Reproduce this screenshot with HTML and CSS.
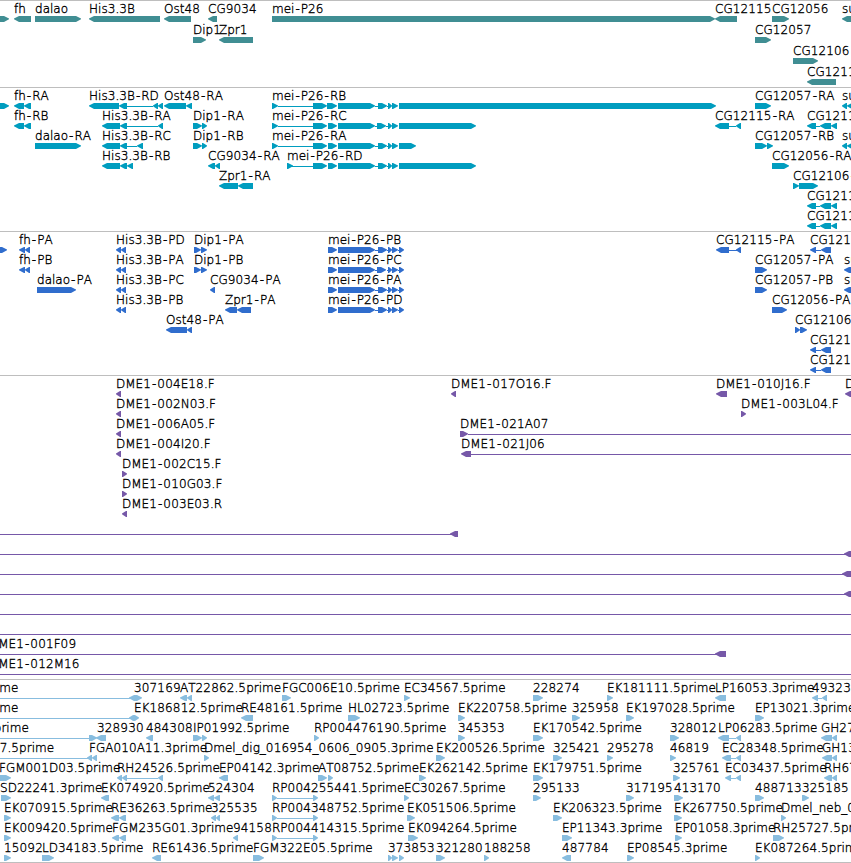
FILE: index.html
```html
<!DOCTYPE html>
<html lang="en">
<head>
    <meta charset="UTF-8">
    <meta name="viewport" content="width=device-width, initial-scale=1.0">
    <title>Genome browser</title>
    <link rel="stylesheet" href="styles.css">
</head>
<body>
    <div id="browser">
        <section class="track gene" id="gene"></section>
        <section class="track transcript" id="transcript"></section>
        <section class="track protein" id="protein"></section>
        <section class="track bac" id="bac"></section>
        <section class="track est" id="est"></section>
    </div>
    <script src="tracks.js"></script>
</body>
</html>
```
FILE: styles.css
```css
body { margin: 0; background-color: #fff; overflow: hidden; }
#browser { width: 851px; overflow: hidden; border-bottom: 1px solid #bebebe; }

.track { box-sizing: border-box; border-top: 1px solid #bebebe; overflow: hidden; }
.row { display: block; width: 851px; height: 20px; overflow: visible; }
.row text { font-family: "DejaVu Sans", sans-serif; font-size: 12px; font-weight: 200; font-kerning: none; fill: #000; stroke: #000; stroke-width: 0.35px; white-space: pre; }

.gene { height: 87px; color: #408e93; }
.gene .row { height: 21px; }
.transcript { height: 144px; color: #009dbf; }
.protein { height: 144px; color: #306dcd; }
.bac { height: 304px; color: #7658a8; }
.est { height: 183px; color: #88bddf; }

.shape { fill: currentColor; }
.intron { fill: currentColor; shape-rendering: crispEdges; }
```
FILE: tracks.js
```js
// feature: [label, parts, label x (default: start of first part)]
// parts: ">a:b" forward block, "<a:b" reverse block, "-a:b" connecting line
var his = "<102:120 <120:127 ";
var cg = "<807:816 -816:820 <820:831 <831:837";
var cgp = "<810:816 -816:821 <821:831";
var mei = "-278:313 >313:327 >328:337 >338:375 -375:378 >378:387 -387:388 >388:392 >392:398 ";
var meip = ">328:337 >338:375 -375:378 >378:387 -387:388 >388:392 >392:398 -398:400 >399:404";
var rp = ">272:277 -277:313 >313:318";

var tracks = {
    gene: [
        [["", ">-10:9"], ["fh", "<14:31"], ["dalao", ">35:81"], ["His3.3B", "<89:160"], ["Ost48", "<164:191"], ["CG9034", "<208:217"], ["mei-P26", ">272:715"], ["CG12115", "<715:737"], ["CG12056", ">772:789"], ["su(s)", "<842:870"]],
        [["Dip1", ">193:206"], ["Zpr1", "<219:253"], ["CG12057", ">755:771"]],
        [["CG12106", ">793:818"]],
        [["CG12119", "<807:836"]]
    ],
    transcript: [
        [["", ">-10:9"], ["fh-RA", "<14:24 <24:31"], ["His3.3B-RD", "<89:119 <119:127 -127:153 <153:158 <158:163"], ["Ost48-RA", "<164:186 <186:192"], ["mei-P26-RB", ">272:278 -278:313 >313:327 >327:337 >338:375 -375:378 >378:387 -387:388 >388:392 >392:398 >399:716"], ["CG12057-RA", ">755:771"], ["su(s)-RA", "<842:847 <847:870"]],
        [["fh-RB", "<14:24 <24:31"], ["His3.3B-RA", his + "-127:158 <158:163"], ["Dip1-RA", ">193:202 >202:207"], ["mei-P26-RC", ">272:278 -278:313 >313:327 >328:337 >338:375 -375:377 >377:386 -386:388 >388:392 >392:398 >399:476"], ["CG12115-RA", "<715:729 -729:736 <736:741"], ["CG12119-RA", cg]],
        [["dalao-RA", ">35:81"], ["His3.3B-RC", his + "-127:137 <137:143"], ["Dip1-RB", ">193:202 >202:207"], ["mei-P26-RA", ">272:278 " + mei + ">399:416"], ["CG12057-RB", ">755:767 >767:773"], ["su(s)-RB", "<842:847 <847:870"]],
        [["His3.3B-RB", his + "<127:133"], ["CG9034-RA", "<208:215 <215:220"], ["mei-P26-RD", ">287:293 " + mei.replace("-278", "-292") + ">399:476"], ["CG12056-RA", ">772:789"]],
        [["Zpr1-RA", "<219:238 <238:253"], ["CG12106-RA", ">793:799 >799:818"]],
        [["CG12119-RB", cg]],
        [["CG12119-RC", cg]]
    ],
    protein: [
        [["", ">-10:7"], ["fh-PA", "<19:25 <25:30"], ["His3.3B-PD", "<116:121 <121:126"], ["Dip1-PA", ">194:201 >201:207"], ["mei-P26-PB", meip], ["CG12115-PA", "<716:729 -729:737 <736:741"], ["CG12119-PA", cgp]],
        [["fh-PB", "<19:25 <25:30"], ["His3.3B-PA", "<116:121 <121:126"], ["Dip1-PB", ">194:201 >201:207"], ["mei-P26-PC", meip.replace(">378:387", ">377:386")], ["CG12057-PA", ">755:767"], ["su(s)-PA", "<844:870"]],
        [["dalao-PA", ">37:76"], ["His3.3B-PC", "<116:121 <121:126"], ["CG9034-PA", "<210:215"], ["mei-P26-PA", meip], ["CG12057-PB", ">755:767"], ["su(s)-PB", "<844:870"]],
        [["His3.3B-PB", "<116:121 <121:126"], ["Zpr1-PA", "<225:237 <237:251"], ["mei-P26-PD", meip], ["CG12056-PA", ">772:787"]],
        [["Ost48-PA", "<166:187 <187:192"], ["CG12106-PA", ">795:800 >800:807"]],
        [["CG12119-PB", cgp]],
        [["CG12119-PC", cgp]]
    ],
    bac: [
        [["DME1-004E18.F", "<116:121"], ["DME1-017O16.F", "<451:456"], ["DME1-010J16.F", "<716:727"], ["DME1-001F09.F", "<845:870"]],
        [["DME1-002N03.F", "<116:121"], ["DME1-003L04.F", ">741:746"]],
        [["DME1-006A05.F", "<116:121"], ["DME1-021A07", ">460:468 -468:851"]],
        [["DME1-004I20.F", "<116:121"], ["DME1-021J06", "<461:471 -471:851"]],
        [["DME1-002C15.F", ">122:127"]],
        [["DME1-010G03.F", ">122:127"]],
        [["DME1-003E03.R", "<122:127"]],
        [["", "-0:452 <450:458"]],
        [["", "-0:846 <844:854"]],
        [["", "-0:844 <842:854"]],
        [["", "-0:846 <844:854"]],
        [["", "-0:851"]],
        [["", "-0:851"]],
        [["DME1-001F09", "-0:717 <715:726", -11]],
        [["DME1-012M16", "-0:851", -11]]
    ],
    est: [
        [["5prime", "-0:130 <129:135 >135:142", -24.5], ["307169", "", 134], ["AT22862.5prime", "<180:187 <187:192"], ["FGC006E10.5prime", ">282:291"], ["EC34567.5prime", ">404:410"], ["228274", ">533:543"], ["EK181111.5prime", ">607:613"], ["LP16053.3prime", "<715:726"], ["493234", "<812:818 -818:822 <822:827"]],
        [["5prime", "-0:130 <129:134 >134:139", -24.5], ["EK186812.5prime", "", 134], ["RE48161.5prime", "<241:253"], ["HL02723.5prime", ">348:360"], ["EK220758.5prime", ">458:465"], ["325958", ">572:580"], ["EK197028.5prime", ">626:634"], ["EP13021.3prime", ">755:764"]],
        [["prime", "-0:89 >89:97 <96:106", -6.2], ["328930", "", 97], ["484308", "<146:153"], ["IP01992.5prime", ">193:202 >202:207"], ["RP004476190.5prime", ">314:319"], ["345353", ">458:465"], ["EK170542.5prime", ">533:543"], ["328012", ">670:679"], ["LP06283.5prime", "<718:729 -729:736 <736:741"], ["GH27654.5prime", "<821:832 <832:837"]],
        [["7.5prime", "-0:88 <87:92 <92:97", -0.3], ["FGA010A11.3prime", "", 89], ["Dmel_dig_016954_0606_0905.3prime", ">204:209"], ["EK200526.5prime", ">436:445"], ["325421", ">553:562"], ["295278", ">607:613"], ["46819", ">670:676"], ["EC28348.5prime", "<722:731 -731:736 <736:741"], ["GH13256.5prime", "<822:832 <832:837"]],
        [["FGM001D03.5prime", ">-5:11", -1], ["RH24526.5prime", "<117:122 <122:127 -127:158 <158:163"], ["EP04142.3prime", "<219:228"], ["AT08752.5prime", ">318:327 >328:333"], ["EK262142.5prime", ">419:426"], ["EK179751.5prime", ">533:543"], ["325761", ">673:680"], ["EC03437.5prime", "<725:731 -731:736 <736:741"], ["RH67967.5prime", "<824:832 <832:837"]],
        [["SD22241.3prime", ">1:11", 0], ["EK074920.5prime", "<101:109"], ["524304", "<208:214 <214:220"], ["RP004255441.5prime", rp], ["EC30267.5prime", ">404:409"], ["295133", ">533:541"], ["317195", ">626:634"], ["413170", ">674:683"], ["488713", ">755:764"], ["325185", ">802:809"]],
        [["EK070915.5prime", ">4:11"], ["RE36263.5prime", "<111:119 <119:126"], ["325535", "<211:216 <216:220"], ["RP004348752.5prime", rp], ["EK051506.5prime", ">407:415"], ["EK206323.5prime", ">553:562"], ["EK267750.5prime", ">674:682"], ["Dmel_neb_0654", ">781:786"]],
        [["EK009420.5prime", ">4:11"], ["FGM235G01.3prime", "<112:119 <119:126"], ["94158", "<233:238"], ["RP004414315.5prime", rp], ["EK094264.5prime", ">408:418"], ["EP11343.3prime", ">562:572"], ["EP01058.3prime", ">675:682"], ["RH25727.5prime", ">773:784"]],
        [["15092", ">4:11"], ["LD34183.5prime", ">42:54"], ["RE61436.5prime", "<152:161"], ["FGM322E05.5prime", ">253:264"], ["373853", ">388:392 >392:398 >399:404"], ["321280", ">436:445"], ["188258", ">484:489"], ["487784", "<562:571"], ["EP08545.3prime", ">627:634"], ["EK087264.5prime", ">755:760"]]
    ]
};

var NS = "http://www.w3.org/2000/svg";

function add(parent, name, attrs) {
    var el = document.createElementNS(NS, name);
    for (var key in attrs) {
        el.setAttribute(key, attrs[key]);
    }
    parent.appendChild(el);
    return el;
}

function drawPart(svg, dir, a, b) {
    if (dir == "-") {
        add(svg, "rect", { "class": "intron", x: a, y: 18, width: b - a, height: 1 });
        return;
    }
    var head = Math.min(5, b - a - 1);
    var pts;
    if (dir == ">") {
        pts = [[a, 15], [b - head, 15], [b, 17.5], [b, 18.3], [b - head, 21], [a, 21]];
    } else {
        pts = [[b, 15], [a + head, 15], [a, 17.5], [a, 18.3], [a + head, 21], [b, 21]];
    }
    add(svg, "polygon", { "class": "shape", points: pts.join(" ") });
}

// digits run slightly wide, hyphens get room on both sides
function spacing(label) {
    return label.split("").map(function (c, i) {
        var prev = label.charAt(i - 1);
        var gap = 0;
        if (c == "-" || prev == "-") gap += 1;
        if (/\d/.test(prev)) gap += 0.15;
        return gap;
    }).join(" ");
}

for (var id in tracks) {
    var box = document.getElementById(id);
    tracks[id].forEach(function (features) {
        var svg = add(box, "svg", { "class": "row" });
        features.forEach(function (f) {
            var start = null;
            var re = /([<>-])(-?\d+):(\d+)/g;
            var m;
            while ((m = re.exec(f[1]))) {
                if (start === null) start = +m[2];
                drawPart(svg, m[1], +m[2], +m[3]);
            }
            if (!f[0]) return;
            var text = add(svg, "text", { x: f.length > 2 ? f[2] : start, y: 12, dx: spacing(f[0]) });
            text.textContent = f[0];
        });
    });
}
```
